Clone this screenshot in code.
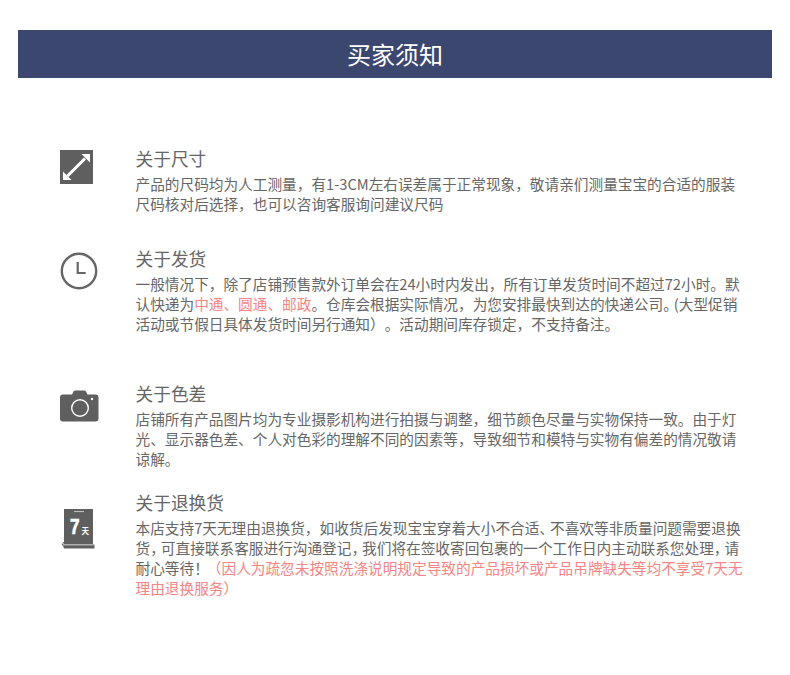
<script>
  // 买家须知 page
</script>

<div class="page">
  <header class="banner">买家须知</header>

  <section class="notes">
    <article class="note size">
      <div class="icon">
        <svg width="33" height="34" viewBox="0 0 33 34">
          <rect width="33" height="34" fill="#5f5f5f" />
          <path d="M7.5 26 25 8.5" stroke="#fff" stroke-width="3" fill="none" />
          <path d="M21.5 4H30V12.5Z" fill="#fff" />
          <path d="M3 21.5V30H11.5Z" fill="#fff" />
        </svg>
      </div>
      <div class="body">
        <h3>关于尺寸</h3>
        <p>产品的尺码均为人工测量，有1-3CM左右误差属于正常现象，敬请亲们测量宝宝的合适的服装<br />尺码核对后选择，也可以咨询客服询问建议尺码</p>
      </div>
    </article>

    <article class="note ship">
      <div class="icon">
        <svg width="38" height="38" viewBox="0 0 38 38">
          <circle cx="19" cy="19" r="17.2" fill="none" stroke="#666" stroke-width="2.4" />
          <path d="M17.7 10V21H25.7" fill="none" stroke="#666" stroke-width="2.2" />
        </svg>
      </div>
      <div class="body">
        <h3>关于发货</h3>
        <p>一般情况下，除了店铺预售款外订单会在24小时内发出，所有订单发货时间不超过72小时。默<br />认快递为<span class="red">中通、圆通、邮政</span>。仓库会根据实际情况，为您安排最快到达的快递公司<span class="tight">。</span>(大型促销<br />活动或节假日具体发货时间另行通知）。活动期间库存锁定，不支持备注。</p>
      </div>
    </article>

    <article class="note color">
      <div class="icon">
        <svg width="39" height="32" viewBox="0 0 39 32">
          <path d="M3 4.5H12L13.5 1.5Q14 .5 15.5 .5H24Q25.5 .5 26 1.5L27.5 4.5H35.5Q38.5 4.5 38.5 7.5V28.5Q38.5 31.5 35.5 31.5H3Q0 31.5 0 28.5V7.5Q0 4.5 3 4.5Z" fill="#5f5f5f" />
          <circle cx="20" cy="18" r="8.3" fill="none" stroke="#fff" stroke-width="1.4" />
          <circle cx="32" cy="9" r="1.2" fill="#fff" />
        </svg>
      </div>
      <div class="body">
        <h3>关于色差</h3>
        <p>店铺所有产品图片均为专业摄影机构进行拍摄与调整，细节颜色尽量与实物保持一致。由于灯<br />光、显示器色差、个人对色彩的理解不同的因素等，导致细节和模特与实物有偏差的情况敬请<br />谅解。</p>
      </div>
    </article>

    <article class="note back">
      <div class="icon">
        <svg width="33" height="40" viewBox="0 0 33 40">
          <path d="M1 0H30V35H1Z" fill="#5f5f5f" />
          <path d="M11 2.5H21" stroke="#bbb" stroke-width="1.2" />
          <path d="M1 33 -1 36H31.5" fill="none" stroke="#5f5f5f" stroke-width="1" />
          <path d="M0 36.5H31.5V39.5H1Z" fill="#5f5f5f" />
          <text transform="translate(7 25) scale(.78 1)" class="seven">7</text>
          <text x="18.5" y="25" class="tian">天</text>
        </svg>
      </div>
      <div class="body">
        <h3>关于退换货</h3>
        <p>本店支持7天无理由退换货，如收货后发现宝宝穿着大小不合适<span class="tight">、</span>不喜欢等非质量问题需要退换<br />货<span class="tight">，</span>可直接联系客服进行沟通登记<span class="tight">，</span>我们将在签收寄回包裹的一个工作日内主动联系您处理<span class="tight">，</span>请<br />耐心等待<span class="tight-mark">！</span><span class="red">（因人为疏忽未按照洗涤说明规定导致的产品损坏或产品吊牌缺失等均不享受7天无<br />理由退换服务）</span></p>
      </div>
    </article>
  </section>
</div>

<style>
  :global(body) {
    margin: 0;
    background: #fff;
  }
  .page {
    width: 790px;
    height: 675px;
    padding: 30px 18px 0;
    box-sizing: border-box;
    font-family: "Noto Sans CJK SC", "Noto Sans", sans-serif;
    color: #666;
    overflow: hidden;
    text-spacing-trim: space-all;
  }
  .banner {
    height: 48px;
    line-height: 48px;
    background: #3c476f;
    color: #fff;
    font-size: 24px;
    text-align: center;
  }
  .notes {
    padding-top: 68px;
  }
  .note {
    display: flex;
  }
  .size { height: 100px; }
  .ship { height: 135px; }
  .color { height: 109px; }
  .icon {
    width: 117.5px;
    flex: none;
    padding-left: 42px;
    box-sizing: border-box;
  }
  .icon svg {
    display: block;
    overflow: visible;
  }
  .size .icon { padding-top: 4px; }
  .ship .icon { padding-top: 6px; }
  .color .icon { padding-top: 9px; }
  .back .icon { padding-top: 19px; padding-left: 45px; }
  h3 {
    margin: 0 0 4px;
    font-size: 17.7px;
    line-height: 24px;
    font-weight: 400;
    color: #666;
  }
  p {
    margin: 0;
    font-size: 14.67px;
    line-height: 20px;
    white-space: nowrap;
  }
  .red {
    color: #f58484;
  }
  .tight {
    letter-spacing: -4px;
  }
  .tight-mark {
    letter-spacing: -2px;
  }
  .seven {
    font-family: "Liberation Sans", sans-serif;
    font-weight: 700;
    font-size: 22px;
    fill: #fff;
    stroke: #fff;
    stroke-width: 0.7px;
  }
  .tian {
    font-family: "Noto Sans CJK SC", sans-serif;
    font-weight: 700;
    font-size: 7.5px;
    fill: #fff;
  }
</style>
